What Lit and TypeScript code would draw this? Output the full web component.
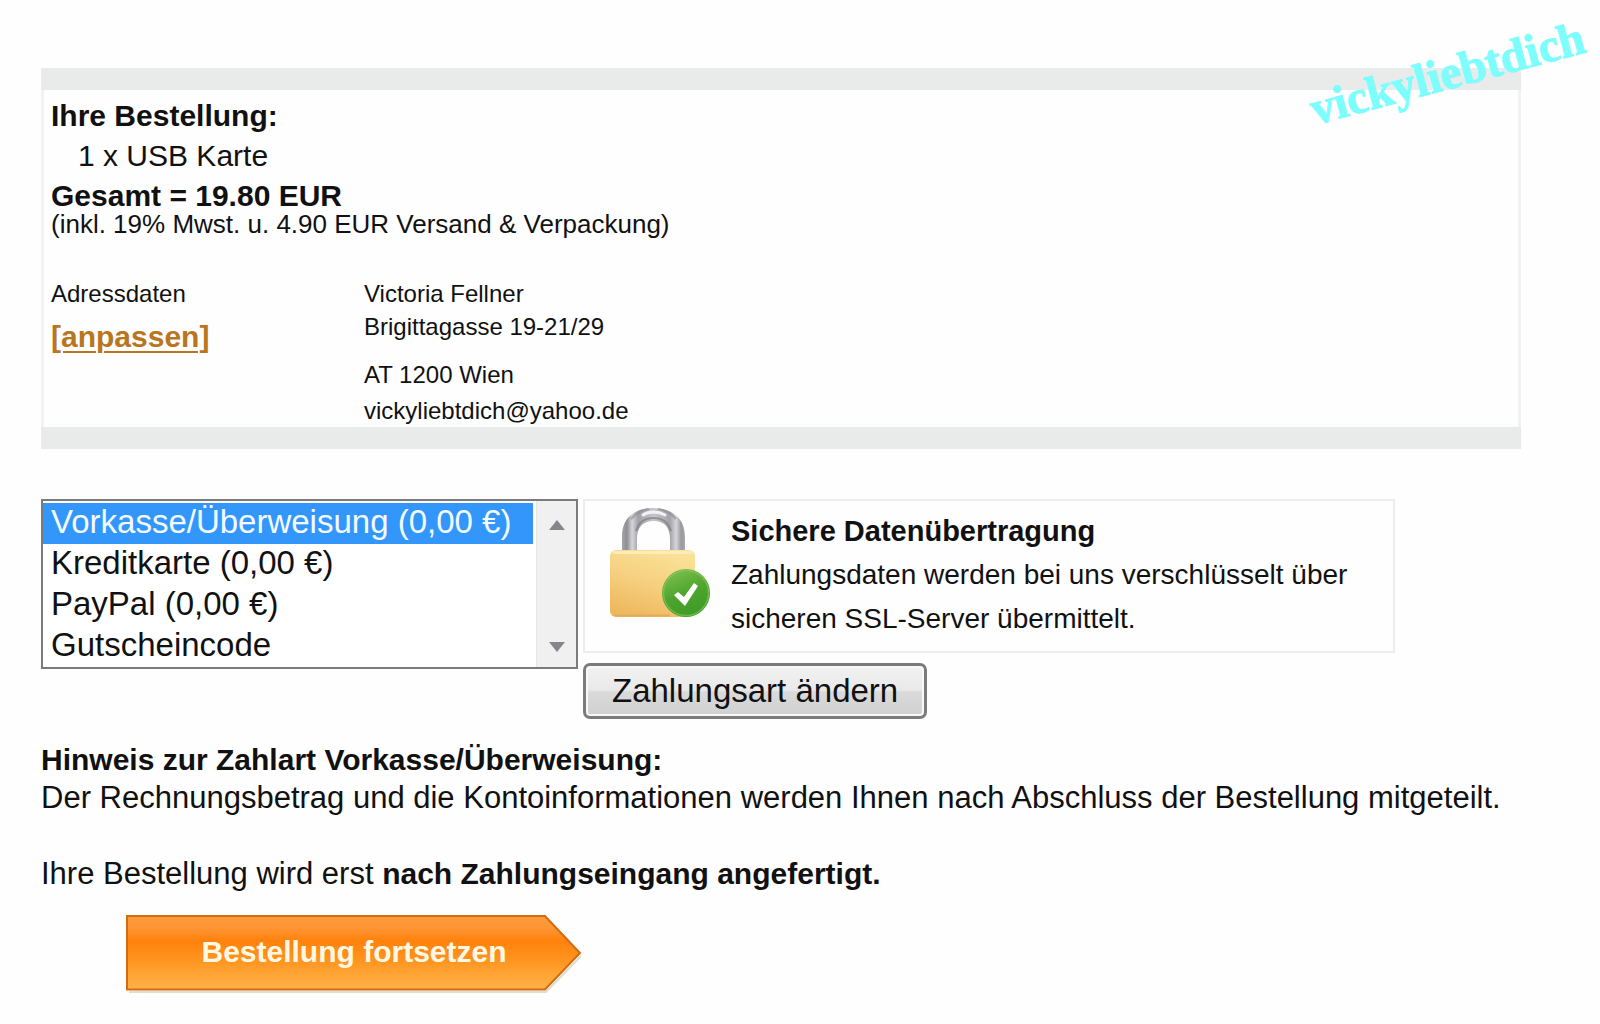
import { LitElement, html, css, svg } from "lit";
import { customElement, state } from "lit/decorators.js";

interface PaymentOption {
  value: string;
  label: string;
}

const PAYMENT_OPTIONS: PaymentOption[] = [
  { value: "vorkasse", label: "Vorkasse/Überweisung (0,00 €)" },
  { value: "kreditkarte", label: "Kreditkarte (0,00 €)" },
  { value: "paypal", label: "PayPal (0,00 €)" },
  { value: "gutschein", label: "Gutscheincode" },
];

const lockIcon = svg`
  <svg class="lock" viewBox="0 0 102 112" aria-hidden="true">
    <defs>
      <linearGradient id="shackle" x1="0" x2="1" y1="0" y2="0">
        <stop offset="0" stop-color="#a4a4a8" />
        <stop offset="0.08" stop-color="#8f8f94" />
        <stop offset="0.16" stop-color="#d6d6da" />
        <stop offset="0.26" stop-color="#a0a0a5" />
        <stop offset="0.5" stop-color="#c8c8cc" />
        <stop offset="0.76" stop-color="#a4a4a8" />
        <stop offset="0.86" stop-color="#d6d6da" />
        <stop offset="0.94" stop-color="#98989d" />
        <stop offset="1" stop-color="#a8a8ac" />
      </linearGradient>
      <linearGradient id="body" x1="0.7" x2="0.3" y1="0" y2="1">
        <stop offset="0" stop-color="#fae29a" />
        <stop offset="0.5" stop-color="#f6d080" />
        <stop offset="1" stop-color="#eeb85e" />
      </linearGradient>
      <linearGradient id="seal" x1="0.3" x2="0.7" y1="0" y2="1">
        <stop offset="0" stop-color="#7cc04c" />
        <stop offset="0.5" stop-color="#4ea42e" />
        <stop offset="1" stop-color="#3c9a26" />
      </linearGradient>
    </defs>
    <path d="M13 46V30C13 11 25 1 44 1S76 11 76 30V46H61V32C61 20 55 14 44.500 14S28 20 28 32V46Z" fill="url(#shackle)" />
    <path d="M22 12C28 5 34 3 40 2M67 12C61 5 55 3 49 2" fill="none" stroke="#8a8a8e" stroke-width="2" opacity="0.6" />
    <path d="M34 8C40 4 49 4 56 8" fill="none" stroke="#f2f2f4" stroke-width="3" stroke-linecap="round" />
    <path d="M27 24C30 14 37 11 44.500 11S59 14 62 24" fill="none" stroke="#7e7e83" stroke-width="2" opacity="0.7" />
    <rect x="1" y="43" width="85" height="67" rx="6" fill="url(#body)" />
    <path d="M5 45.500H82" stroke="#fdebb8" stroke-width="3" stroke-linecap="round" />
    <path d="M6 108.500H60" stroke="#e2ac58" stroke-width="2" stroke-linecap="round" />
    <circle cx="77" cy="86" r="24" fill="url(#seal)" />
    <circle cx="77" cy="86" r="22.500" fill="none" stroke="#8aca66" stroke-width="1.500" opacity="0.6" />
    <path d="M65 88L69 85L75 90L85 76L89 79L76 99Z" fill="#fff" />
  </svg>
`;

const arrowShape = svg`
  <svg class="arrow" viewBox="0 0 456 78" preserveAspectRatio="none" aria-hidden="true">
    <defs>
      <linearGradient id="orange" x1="0" x2="0" y1="0" y2="1">
        <stop offset="0" stop-color="#ff9a3c" />
        <stop offset="0.15" stop-color="#ff9636" />
        <stop offset="0.34" stop-color="#ff820c" />
        <stop offset="0.6" stop-color="#ff9420" />
        <stop offset="0.8" stop-color="#ffa636" />
        <stop offset="1" stop-color="#ffb046" />
      </linearGradient>
    </defs>
    <path d="M3 77H420L455 41" fill="none" stroke="#e4dccb" stroke-width="2" />
    <path d="M1 1H419L454 38L419 74.500H1Z" fill="url(#orange)" stroke="#cf6c14" stroke-width="2" />
  </svg>
`;

@customElement("app-root")
export class AppRoot extends LitElement {
  @state() private payment = "vorkasse";

  static styles = css`
    :host {
      display: block;
      position: relative;
      overflow: hidden;
      min-height: 100vh;
      box-sizing: border-box;
      padding: 68px 79px 30px 41px;
      background: #fefefe;
      color: #111;
      font: 30px/38px "Liberation Sans", Arial, sans-serif;
    }
    * {
      box-sizing: border-box;
    }
    h1,
    h2,
    p,
    address {
      margin: 0;
      font-size: inherit;
      font-style: normal;
    }
    .watermark {
      position: absolute;
      top: 48px;
      right: 12px;
      color: #7dfefd;
      -webkit-text-stroke: 1px #7dfefd;
      font: bold 47px/50px "Liberation Serif", "Times New Roman", serif;
      transform: rotate(-15deg);
    }
    .order {
      border: solid #e9eaea;
      border-width: 22px 0;
      box-shadow: inset 3px 0 #f1f2f2, inset -3px 0 #f1f2f2;
      padding: 6px 10px 0;
      line-height: 40px;
    }
    .item {
      padding-left: 27px;
    }
    .tax {
      font-size: 26px;
      line-height: 24px;
      margin-top: -4px;
    }
    .details {
      display: grid;
      grid-template-columns: 313px 1fr;
      margin-top: 41px;
      font-size: 24px;
      line-height: 33px;
    }
    .edit {
      display: inline-block;
      margin-top: 10px;
      color: #b9761f;
      font-size: 30px;
      font-weight: bold;
      text-decoration-thickness: 2px;
      text-underline-offset: 4px;
    }
    .city {
      margin: 15px 0 3px;
    }
    .payment {
      display: flex;
      align-items: flex-start;
      gap: 5px;
      margin-top: 50px;
    }
    .listbox {
      display: flex;
      flex: 0 0 537px;
      border: 2px solid #7b7b7b;
      background: #fff;
    }
    .list {
      flex: 1;
      min-width: 0;
      height: 166px;
      margin: 0;
      padding: 2px 0 0;
      border: 0;
      outline: 0;
      border-radius: 0;
      background: #fff;
      color: #111;
      font: 33px/41px "Liberation Sans", Arial, sans-serif;
      overflow: hidden;
      scrollbar-width: none;
    }
    .list option {
      height: 41px;
      min-height: 41px;
      padding: 0 8px;
      line-height: 41px;
    }
    .list option:checked {
      background: #3296fb linear-gradient(#3296fb, #3296fb);
      color: #fff;
      -webkit-text-fill-color: #f4fbff;
    }
    .track {
      display: flex;
      flex-direction: column;
      justify-content: space-between;
      align-items: center;
      width: 40px;
      margin-left: 3px;
      padding: 18px 0 14px;
      background: #f0f0f0;
      border-left: 1px solid #e6e6e6;
    }
    .tick {
      display: block;
      width: 18px;
      height: 12px;
    }
    .side {
      flex: 0 1 812px;
      min-width: 0;
    }
    .secure {
      display: flex;
      gap: 20px;
      border: 2px solid #ededed;
      min-height: 154px;
      padding: 6px 24px 8px;
      font-size: 28px;
      line-height: 44px;
    }
    .secure-title {
      font-size: 29px;
      line-height: 44px;
    }
    .secure-text {
      padding-top: 2px;
    }
    .lock {
      flex: none;
      width: 102px;
      height: 112px;
    }
    .change {
      height: 56px;
      margin-top: 10px;
      padding: 0 26px;
      border: 3px solid #7b7b7b;
      border-radius: 7px;
      background: linear-gradient(#f2f2f2, #e9e9e9 48%, #dadada 52%, #d0d0d0);
      box-shadow: inset 0 0 0 2px #f8f8f8;
      color: #111;
      font: 33px/40px "Liberation Sans", Arial, sans-serif;
    }
    .note {
      margin-top: 22px;
      font-size: 31px;
    }
    .note h2,
    .note strong {
      font-size: 30px;
    }
    .pending {
      margin-top: 38px;
    }
    .continue {
      display: grid;
      align-items: center;
      width: 456px;
      height: 78px;
      margin: 22px 0 0 85px;
      padding: 0;
      border: 0;
      background: none;
      color: #fff8e4;
      font: bold 30px/38px "Liberation Sans", Arial, sans-serif;
    }
    .continue > * {
      grid-area: 1 / 1;
    }
    .arrow {
      display: block;
      width: 100%;
      height: 100%;
    }
    .caption {
      position: relative;
      padding-bottom: 4px;
    }
  `;

  private onPayment(e: Event) {
    this.payment = (e.target as HTMLSelectElement).value;
  }

  render() {
    return html`
      <section class="order">
        <h1>Ihre Bestellung:</h1>
        <p class="item">1 x USB Karte</p>
        <p><strong>Gesamt = 19.80 EUR</strong></p>
        <p class="tax">(inkl. 19% Mwst. u. 4.90 EUR Versand &amp; Verpackung)</p>
        <div class="details">
          <div>
            <p>Adressdaten</p>
            <a class="edit" href="#adresse">[anpassen]</a>
          </div>
          <address>
            <p>Victoria Fellner</p>
            <p>Brigittagasse 19-21/29</p>
            <p class="city">AT 1200 Wien</p>
            <p>vickyliebtdich@yahoo.de</p>
          </address>
        </div>
      </section>

      <section class="payment">
        <div class="listbox">
          <select class="list" size="4" aria-label="Zahlungsart" @change=${this.onPayment}>
            ${PAYMENT_OPTIONS.map(
              (o) => html`<option value=${o.value} ?selected=${o.value === this.payment}>${o.label}</option>`
            )}
          </select>
          <div class="track" aria-hidden="true">
            <svg class="tick" viewBox="0 0 18 12"><path d="M9 1L17 11H1Z" fill="#85858a" /></svg>
            <svg class="tick" viewBox="0 0 18 12"><path d="M9 11L17 1H1Z" fill="#85858a" /></svg>
          </div>
        </div>
        <div class="side">
          <div class="secure">
            ${lockIcon}
            <div class="secure-text">
              <h2 class="secure-title">Sichere Datenübertragung</h2>
              <p>Zahlungsdaten werden bei uns verschlüsselt über sicheren SSL-Server übermittelt.</p>
            </div>
          </div>
          <button class="change" type="button">Zahlungsart ändern</button>
        </div>
      </section>

      <section class="note">
        <h2>Hinweis zur Zahlart Vorkasse/Überweisung:</h2>
        <p>Der Rechnungsbetrag und die Kontoinformationen werden Ihnen nach Abschluss der Bestellung mitgeteilt.</p>
        <p class="pending">Ihre Bestellung wird erst <strong>nach Zahlungseingang angefertigt.</strong></p>
      </section>

      <button class="continue" type="button">
        ${arrowShape}
        <span class="caption">Bestellung fortsetzen</span>
      </button>

      <div class="watermark">vickyliebtdich</div>
    `;
  }
}
